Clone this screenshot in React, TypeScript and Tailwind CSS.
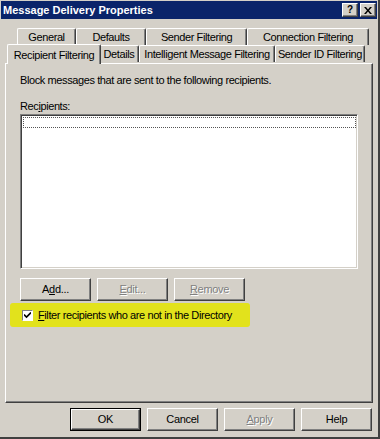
import React from "react";

const font = "font-['Liberation_Sans',Arial,sans-serif]";

const raised =
  "border border-t-white border-l-white border-r-[#404040] border-b-[#404040] shadow-[inset_-1px_-1px_0_#808080]";

const Btn = ({
  children,
  disabled = false,
  isDefault = false,
  className = "",
}: {
  children: React.ReactNode;
  disabled?: boolean;
  isDefault?: boolean;
  className?: string;
}) => {
  const body = (
    <div
      className={`flex h-full w-full items-center justify-center whitespace-nowrap bg-[#d4d0c8] text-[11px] tracking-[-0.3px] ${raised} ${
        disabled ? "text-[#808080] [text-shadow:1px_1px_0_#fff]" : "text-black"
      }`}
    >
      {children}
    </div>
  );
  if (isDefault) {
    return <div className={`border border-black ${className}`}>{body}</div>;
  }
  return <div className={className}>{body}</div>;
};

const Tab = ({
  label,
  width,
  selected = false,
}: {
  label: string;
  width: string;
  selected?: boolean;
}) => {
  if (selected) {
    return (
      <div
        className={`relative z-10 -mb-px flex h-[20px] items-start justify-center whitespace-nowrap rounded-t-[2px] border-l border-t border-r border-l-white border-t-white border-r-[#404040] bg-[#d4d0c8] pt-[2px] text-[11px] tracking-[-0.4px] shadow-[inset_-1px_0_0_#808080] ${width}`}
      >
        {label}
      </div>
    );
  }
  return (
    <div
      className={`flex h-[17px] items-center justify-center whitespace-nowrap rounded-t-[2px] border-l border-t border-r border-l-white border-t-white border-r-[#404040] bg-[#d4d0c8] text-[11px] tracking-[-0.4px] shadow-[inset_-1px_0_0_#808080] ${width}`}
    >
      {label}
    </div>
  );
};

export default function App() {
  return (
    <div
      className={`flex h-[439px] w-[380px] flex-col border-r-2 border-b-2 border-r-[#404040] border-b-[#404040] bg-[#d4d0c8] ${font} text-black`}
    >
      {/* title bar */}
      <div className="mx-[1px] mt-[1px] flex h-[18px] items-center justify-between bg-[#0a246a] pl-[2px] pr-[1px]">
        <span className="text-[11px] font-bold text-white">Message Delivery Properties</span>
        <div className="flex gap-[2px]">
          <div className={`flex h-[14px] w-[16px] items-center justify-center bg-[#d4d0c8] text-[10px] font-bold leading-none ${raised}`}>
            ?
          </div>
          <div className={`flex h-[14px] w-[16px] items-center justify-center bg-[#d4d0c8] ${raised}`}>
            <svg width="8" height="7" viewBox="0 0 8 7">
              <path d="M0 0h2l2 2.5L6 0h2L5 3.5 8 7H6L4 4.5 2 7H0l3-3.5z" fill="#000" />
            </svg>
          </div>
        </div>
      </div>

      {/* tabs */}
      <div className="mt-[9px] flex pl-[17px]">
        <Tab label="General" width="w-[59px]" />
        <Tab label="Defaults" width="w-[70px]" />
        <Tab label="Sender Filtering" width="w-[101px]" />
        <Tab label="Connection Filtering" width="w-[122px]" />
      </div>
      <div className="-mt-[1px] flex items-end pl-[7px]">
        <div className="-mr-[2px]">
          <Tab label="Recipient Filtering" width="w-[94px]" selected />
        </div>
        <div className="mb-px flex">
          <Tab label="Details" width="w-[40px]" />
          <Tab label="Intelligent Message Filtering" width="w-[136px]" />
          <Tab label="Sender ID Filtering" width="w-[90px]" />
        </div>
      </div>

      {/* panel */}
      <div
        className={`mx-[5px] flex h-[340px] flex-col bg-[#d4d0c8] px-[14px] pt-[9px] text-[11px] tracking-[-0.4px] ${raised}`}
      >
        <p className="leading-[14px]">
          Block messages that are sent to the following recipients.
        </p>
        <p className="mt-[12px] leading-[14px]">
          Rec<span className="underline">i</span>pients:
        </p>
        <div className="mt-[1px] h-[155px] w-[338px] border border-t-[#808080] border-l-[#808080] border-r-white border-b-white bg-white p-[1px] shadow-[inset_1px_1px_0_#404040,inset_-1px_-1px_0_#d4d0c8]">
          <div className="ml-[1px] mt-[1px] h-[11px] w-[333px] border border-dotted border-[#555]" />
        </div>

        <div className="mt-[9px] flex gap-[6px]">
          <Btn className="h-[23px] w-[71px]">
            A<span className="underline">d</span>d...
          </Btn>
          <Btn className="h-[23px] w-[71px]" disabled>
            <span className="underline">E</span>dit...
          </Btn>
          <Btn className="h-[23px] w-[71px]" disabled>
            <span className="underline">R</span>emove
          </Btn>
        </div>

        <div className="-ml-[10px] mt-[2px] flex h-[24px] w-[240px] items-center rounded-[3px] bg-[#e2e21c] pl-[12px]">
          <div className="flex h-[11px] w-[11px] items-center justify-center border border-t-[#808080] border-l-[#808080] border-r-white border-b-white bg-white">
            <svg width="7" height="7" viewBox="0 0 7 7">
              <path d="M0 2.5 L2.5 5 L7 0.5" stroke="#000" strokeWidth="1.6" fill="none" />
            </svg>
          </div>
          <span className="ml-[5px] whitespace-nowrap">
            <span className="underline">F</span>ilter recipients who are not in the Directory
          </span>
        </div>
      </div>

      {/* bottom buttons */}
      <div className="mt-[5px] flex justify-end gap-[6px] pr-[6px]">
        <Btn className="h-[23px] w-[71px]" isDefault>
          OK
        </Btn>
        <Btn className="h-[23px] w-[71px]">Cancel</Btn>
        <Btn className="h-[23px] w-[71px]" disabled>
          <span className="underline">A</span>pply
        </Btn>
        <Btn className="h-[23px] w-[71px]">Help</Btn>
      </div>
    </div>
  );
}
